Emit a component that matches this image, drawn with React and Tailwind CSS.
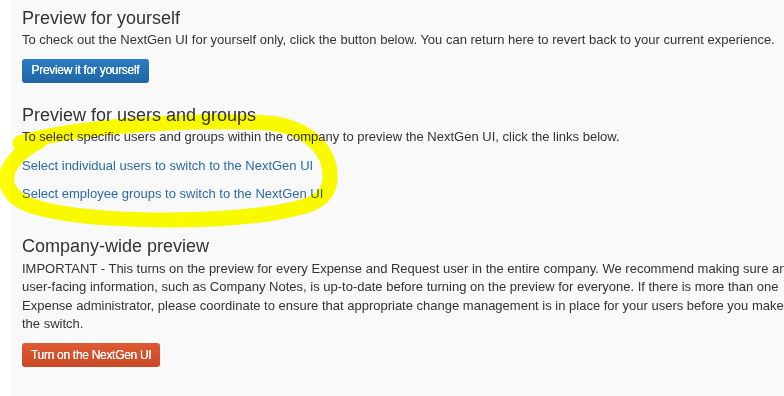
import React from "react";

const font = { fontFamily: '"Liberation Sans", Arial, sans-serif' };

export default function App() {
  return (
    <div className="w-[784px] h-[396px] overflow-hidden bg-white" style={font}>
      <div className="relative ml-[11px] w-[798px] h-[396px] bg-[#f9f9f9] pl-[11px] pt-[7px] text-[13px] leading-[18.57px] text-[#333]">
        <Section title="Preview for yourself">
          <p className="mt-[2px]">
            To check out the NextGen UI for yourself only, click the button below. You can return here to revert back to your current experience.
          </p>
          <button className="mt-[9px] h-[24px] px-[9.5px] rounded-[3px] bg-gradient-to-b from-[#2b7cc2] to-[#1f66a6] text-white text-[12px] tracking-[-0.3px] [text-shadow:0_0_0.4px_#fff]">
            Preview it for yourself
          </button>
        </Section>

        <Section title="Preview for users and groups" className="mt-[21px]">
          <p className="mt-[2px]">
            To select specific users and groups within the company to preview the NextGen UI, click the links below.
          </p>
          <div className="mt-[11px] flex flex-col gap-[9.5px]">
            <a className="text-[#2c6aa8] cursor-pointer">Select individual users to switch to the NextGen UI</a>
            <a className="text-[#2c6aa8] cursor-pointer">Select employee groups to switch to the NextGen UI</a>
          </div>
        </Section>

        <Section title="Company-wide preview" className="mt-[31px]">
          <p className="mt-[3px] w-[776px]">
            IMPORTANT - This turns on the preview for every Expense and Request user in the entire company. We recommend making sure any user-facing information, such as Company Notes, is up-to-date before turning on the preview for everyone. If there is more than one Expense administrator, please coordinate to ensure that appropriate change management is in place for your users before you make the switch.
          </p>
          <button className="mt-[9px] h-[24px] px-[9px] rounded-[3px] bg-gradient-to-b from-[#df5a32] to-[#c84827] text-white text-[12px] tracking-[-0.3px] [text-shadow:0_0_0.4px_#fff]">
            Turn on the NextGen UI
          </button>
        </Section>

        {/* hand-drawn highlight annotation */}
        <svg
          className="absolute left-[-11px] top-0 pointer-events-none mix-blend-multiply"
          width="400"
          height="260"
          viewBox="0 0 400 260"
        >
          <path
            d="M 20 143 C 70 128, 180 118, 268 123 C 310 127, 332 152, 330 180 C 328 204, 302 208, 274 213 C 200 224, 80 222, 32 206 C 6 197, 0 178, 14 161 C 20 153, 30 146, 40 141"
            fill="none"
            stroke="#ffff00"
            strokeWidth="15"
            strokeLinecap="round"
            strokeLinejoin="round"
          />
        </svg>
      </div>
    </div>
  );
}

function Section({ title, className = "", children }) {
  return (
    <div className={`flex flex-col items-start ${className}`}>
      <h3 className="text-[18px] leading-[22px] text-[#333]">{title}</h3>
      {children}
    </div>
  );
}
